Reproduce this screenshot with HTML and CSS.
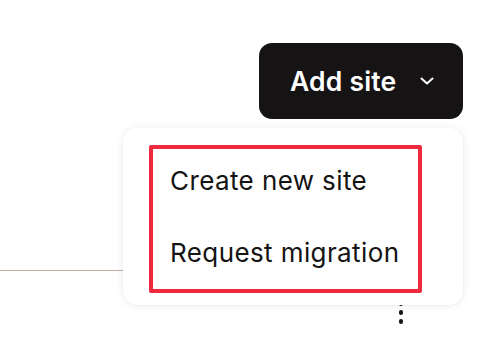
FILE: index.html
```html
<!DOCTYPE html>
<html lang="en">
<head>
<meta charset="utf-8">
<title>Add site</title>
<link rel="stylesheet" href="styles.css">
</head>
<body>
<div class="page">
  <header class="toolbar">
    <button class="add-btn" type="button">
      <span class="add-label">Add site</span>
      <svg class="chev" width="14" height="8" viewBox="0 0 14 8" aria-hidden="true"><path d="M1.5 1.5 L7 6.5 L12.5 1.5" fill="none" stroke="#fff" stroke-width="2" stroke-linecap="round" stroke-linejoin="round"/></svg>
    </button>
  </header>
  <section class="list">
    <div class="row"></div>
    <div class="row-actions">
      <span class="kebab"><i></i><i></i><i></i></span>
    </div>
  </section>
  <div class="menu">
    <ul class="menu-list">
      <li class="menu-item">Create new site</li>
      <li class="menu-item">Request migration</li>
    </ul>
  </div>
</div>
</body>
</html>
```

FILE: styles.css
```css
* { box-sizing: border-box; }
html, body { margin: 0; padding: 0; background: #fff; }
body { font-family: Inter, "Noto Sans", sans-serif; color: #141414; }
.page { position: relative; width: 500px; height: 341px; overflow: hidden; }
.toolbar { display: flex; justify-content: flex-end; padding: 43px 37px 0 0; }
.add-btn {
  display: flex; align-items: center; gap: 23px;
  height: 76px; width: 204px; padding: 0 28px 0 31px;
  background: #151314; color: #fff; border: 0; border-radius: 13px;
  font-family: Inter, sans-serif; font-size: 26.5px; font-weight: 600; letter-spacing: 0.2px;
}
.add-label { line-height: 1; }
.chev { display: block; flex: none; }
.row { height: 152px; margin-right: 80px; border-bottom: 1px solid #c4aca6; }
.row-actions { display: flex; justify-content: flex-end; padding: 30px 97px 0 0; }
.kebab { display: flex; flex-direction: column; align-items: center; gap: 4.5px; }
.kebab i { display: block; width: 4.5px; height: 4.5px; border-radius: 50%; background: #141414; }
.menu {
  position: absolute; top: 128px; right: 37px; width: 340px; height: 177px;
  background: #fff; border-radius: 14px; padding: 17px 41px 12px 26px;
  box-shadow: 0 0 10px rgba(30, 30, 70, 0.07), 0 1px 3px rgba(30, 30, 70, 0.04);
}
.menu-list {
  list-style: none; margin: 0; padding: 17px 8px 21px 17px;
  border: 4px solid #ef2a3e; border-radius: 2px;
  display: flex; flex-direction: column; gap: 42px;
}
.menu-item { font-size: 26px; line-height: 30px; font-weight: 400; letter-spacing: 0.4px; color: #141414; white-space: nowrap; }
```
